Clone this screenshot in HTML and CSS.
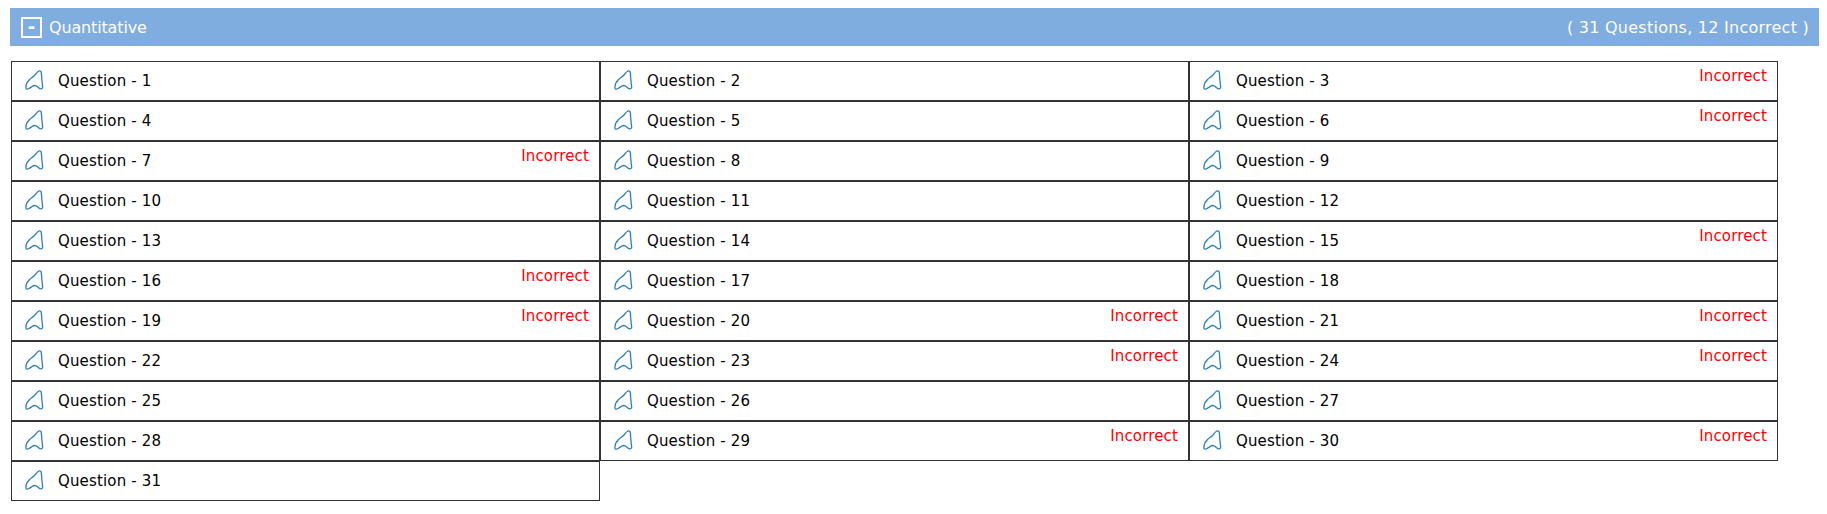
FILE: index.html
```html
<!DOCTYPE html>
<html lang="en">
<head>
    <meta charset="UTF-8">
    <title>Quantitative</title>
    <link rel="stylesheet" href="styles.css">
</head>
<body>
    <svg class="defs" width="0" height="0">
        <symbol id="q_icon" viewBox="0 0 19 21">
            <path d="M1 18.500C.6 15.500 2.500 11.500 4.500 9.500C6 8 8 7 9.500 5.500C11 4 12 2 13.500 1.200C15 .6 16 1 16.300 2.500C16.600 7 17 12 17.600 16C17.900 18 17.200 19 15.500 18.800C14 18.600 13 17 11.500 16C10.300 15.300 9 15.300 7.500 16.200C6 17.300 4.500 18.500 3 19C2 19.300 1.100 19.200 1 18.500Z"/>
        </symbol>
    </svg>

    <div class="sec_head">
        <div class="sec_title"><span class="toggle">-</span>Quantitative</div>
        <div class="sec_count">( 31 Questions, 12 Incorrect )</div>
    </div>

    <ul class="q_lst">
        <li><svg class="ico"><use href="#q_icon"/></svg><span class="q_name">Question - 1</span></li>
        <li><svg class="ico"><use href="#q_icon"/></svg><span class="q_name">Question - 2</span></li>
        <li><svg class="ico"><use href="#q_icon"/></svg><span class="q_name">Question - 3</span><span class="wrong">Incorrect</span></li>
        <li><svg class="ico"><use href="#q_icon"/></svg><span class="q_name">Question - 4</span></li>
        <li><svg class="ico"><use href="#q_icon"/></svg><span class="q_name">Question - 5</span></li>
        <li><svg class="ico"><use href="#q_icon"/></svg><span class="q_name">Question - 6</span><span class="wrong">Incorrect</span></li>
        <li><svg class="ico"><use href="#q_icon"/></svg><span class="q_name">Question - 7</span><span class="wrong">Incorrect</span></li>
        <li><svg class="ico"><use href="#q_icon"/></svg><span class="q_name">Question - 8</span></li>
        <li><svg class="ico"><use href="#q_icon"/></svg><span class="q_name">Question - 9</span></li>
        <li><svg class="ico"><use href="#q_icon"/></svg><span class="q_name">Question - 10</span></li>
        <li><svg class="ico"><use href="#q_icon"/></svg><span class="q_name">Question - 11</span></li>
        <li><svg class="ico"><use href="#q_icon"/></svg><span class="q_name">Question - 12</span></li>
        <li><svg class="ico"><use href="#q_icon"/></svg><span class="q_name">Question - 13</span></li>
        <li><svg class="ico"><use href="#q_icon"/></svg><span class="q_name">Question - 14</span></li>
        <li><svg class="ico"><use href="#q_icon"/></svg><span class="q_name">Question - 15</span><span class="wrong">Incorrect</span></li>
        <li><svg class="ico"><use href="#q_icon"/></svg><span class="q_name">Question - 16</span><span class="wrong">Incorrect</span></li>
        <li><svg class="ico"><use href="#q_icon"/></svg><span class="q_name">Question - 17</span></li>
        <li><svg class="ico"><use href="#q_icon"/></svg><span class="q_name">Question - 18</span></li>
        <li><svg class="ico"><use href="#q_icon"/></svg><span class="q_name">Question - 19</span><span class="wrong">Incorrect</span></li>
        <li><svg class="ico"><use href="#q_icon"/></svg><span class="q_name">Question - 20</span><span class="wrong">Incorrect</span></li>
        <li><svg class="ico"><use href="#q_icon"/></svg><span class="q_name">Question - 21</span><span class="wrong">Incorrect</span></li>
        <li><svg class="ico"><use href="#q_icon"/></svg><span class="q_name">Question - 22</span></li>
        <li><svg class="ico"><use href="#q_icon"/></svg><span class="q_name">Question - 23</span><span class="wrong">Incorrect</span></li>
        <li><svg class="ico"><use href="#q_icon"/></svg><span class="q_name">Question - 24</span><span class="wrong">Incorrect</span></li>
        <li><svg class="ico"><use href="#q_icon"/></svg><span class="q_name">Question - 25</span></li>
        <li><svg class="ico"><use href="#q_icon"/></svg><span class="q_name">Question - 26</span></li>
        <li><svg class="ico"><use href="#q_icon"/></svg><span class="q_name">Question - 27</span></li>
        <li><svg class="ico"><use href="#q_icon"/></svg><span class="q_name">Question - 28</span></li>
        <li><svg class="ico"><use href="#q_icon"/></svg><span class="q_name">Question - 29</span><span class="wrong">Incorrect</span></li>
        <li><svg class="ico"><use href="#q_icon"/></svg><span class="q_name">Question - 30</span><span class="wrong">Incorrect</span></li>
        <li><svg class="ico"><use href="#q_icon"/></svg><span class="q_name">Question - 31</span></li>
    </ul>
</body>
</html>
```

FILE: styles.css
```css
/* reset */
body,ul{margin: 0; padding: 0;}
ul{list-style: none;}
body{
    padding: 8px 8px 0 10px;
    font-family: "DejaVu Sans", Verdana, sans-serif;
    font-size: 15px; color: #000; background-color: #fff;
    letter-spacing: .15px;
}
.defs{display: block; height: 0;}

/* header bar */
.sec_head{
    display: flex; justify-content: space-between; align-items: center;
    height: 38px; padding: 0 10px 0 11px;
    background-color: #7fade0; color: #fff;
    font-size: 16px;
}
.sec_title{display: flex; align-items: center; letter-spacing: -.15px;}
.sec_count{letter-spacing: .25px;}
.toggle{
    display: block; width: 17px; height: 17px; margin-right: 7px;
    border: 2px solid #fff;
    line-height: 16px; text-align: center; font-weight: bold; font-size: 18px;
}

/* question grid */
.q_lst{
    display: grid; grid-template-columns: repeat(3, 589px);
    margin: 15px 0 0 1px;
}
.q_lst li{
    display: flex; align-items: flex-start;
    height: 40px; padding: 0 10px 0 13px;
    border: 1px solid #333;
    box-sizing: border-box;
}
.ico{
    width: 19px; height: 21px; margin: 8px 14px 0 0; flex: none;
    fill: none; stroke: #2f7fb8; stroke-width: 1.3;
}
.q_name{line-height: 38px;}
.wrong{margin-left: auto; margin-top: 5px; line-height: 18px; color: #f00;}
```
